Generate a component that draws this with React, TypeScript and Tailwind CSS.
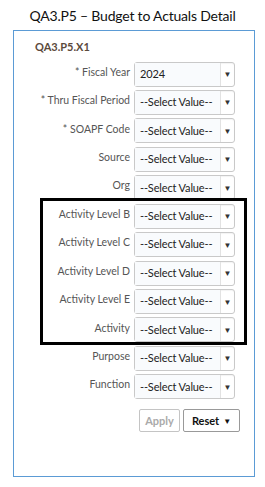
import React from "react";

const rows = [
  { label: "* Fiscal Year", value: "2024" },
  { label: "* Thru Fiscal Period", value: "--Select Value--" },
  { label: "* SOAPF Code", value: "--Select Value--" },
  { label: "Source", value: "--Select Value--" },
  { label: "Org", value: "--Select Value--" },
  { label: "Activity Level B", value: "--Select Value--" },
  { label: "Activity Level C", value: "--Select Value--" },
  { label: "Activity Level D", value: "--Select Value--" },
  { label: "Activity Level E", value: "--Select Value--" },
  { label: "Activity", value: "--Select Value--" },
  { label: "Purpose", value: "--Select Value--" },
  { label: "Function", value: "--Select Value--" },
];

function Select({ value }: { value: string }) {
  return (
    <div className="flex h-[25px] w-[101px] rounded-[3px] border border-[#c9c9c9] bg-white shadow-[inset_0_1px_1px_rgba(0,0,0,0.05)]">
      <div className="flex flex-1 items-center overflow-hidden whitespace-nowrap bg-[#f9fbfd] pl-[5px] text-[11px] tracking-[-0.15px] text-[#222]">
        {value}
      </div>
      <div className="flex w-[14px] items-center justify-center border-l border-[#e2e2e2] text-[8px] text-[#333]">▼</div>
    </div>
  );
}

export default function App() {
  return (
    <div className="relative h-[487px] w-[265px] bg-white font-['Lato',sans-serif]">
      <div className="flex h-[30px] items-center justify-center whitespace-nowrap text-[14px] tracking-[-0.2px] text-[#111]">
        QA3.P5 – Budget to Actuals Detail
      </div>
      <div className="ml-[13px] h-[447px] w-[242px] border border-[#5b9bd5] pr-[19px]">
        <div className="pl-[21px] pt-[8px] text-[11px] font-bold text-[#5b4a3c]">QA3.P5.X1</div>
        <div className="mt-[6px] flex flex-col gap-[3.45px]">
          {rows.map((r) => (
            <div key={r.label} className="flex items-center justify-end gap-[4px]">
              <span className="-mt-[3px] whitespace-nowrap text-[10.5px] text-[#555]">{r.label}</span>
              <Select value={r.value} />
            </div>
          ))}
        </div>
        <div className="mt-[10px] flex justify-end gap-[3px]">
          <button className="h-[23px] w-[41px] rounded-[2px] border border-[#c4c4c4] bg-white text-[11px] font-bold text-[#aaa]">
            Apply
          </button>
          <button className="-mr-[5px] flex h-[23px] w-[57px] items-center justify-center gap-[4px] rounded-[2px] border border-[#999] bg-white text-[11px] font-bold text-[#111]">
            Reset <span className="text-[8px]">▼</span>
          </button>
        </div>
      </div>
      <div className="absolute left-[40px] top-[198px] h-[147px] w-[207px] border-[3px] border-black" />
    </div>
  );
}
